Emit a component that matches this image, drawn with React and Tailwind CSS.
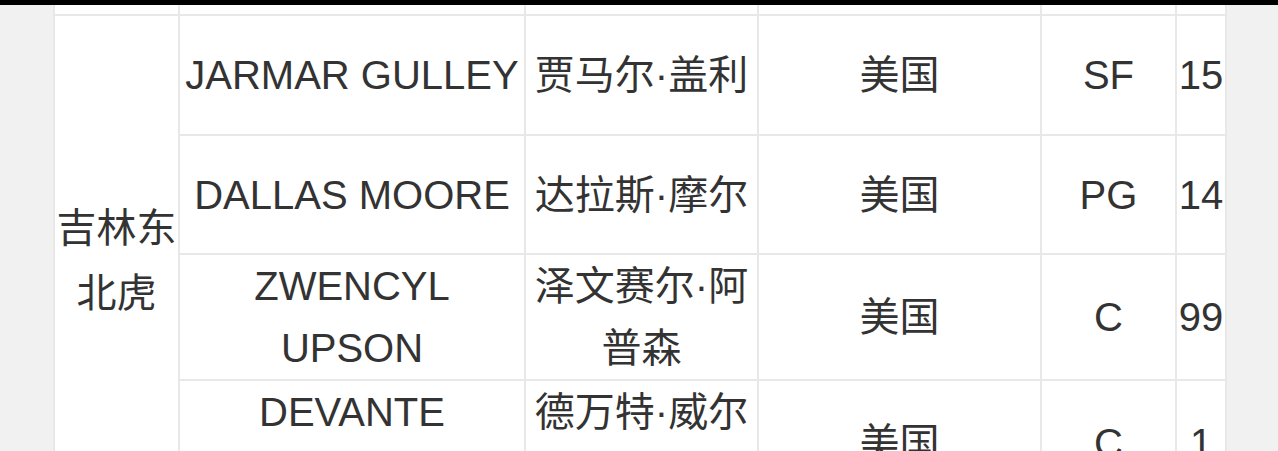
import React from "react";

const rows = [
  { en: "JARMAR GULLEY", cn: "贾马尔·盖利", country: "美国", pos: "SF", num: "15", h: "h-[120px]" },
  { en: "DALLAS MOORE", cn: "达拉斯·摩尔", country: "美国", pos: "PG", num: "14", h: "h-[119px]" },
  { en: "ZWENCYL UPSON", cn: "泽文赛尔·阿普森", country: "美国", pos: "C", num: "99", h: "h-[124px]" },
  { en: "DEVANTE WILSON", cn: "德万特·威尔逊", country: "美国", pos: "C", num: "1", h: "h-[124px]" },
];

const cell = "border-2 border-[#e8e8e8] text-center align-middle p-0";

export default function App() {
  return (
    <div className="h-[451px] w-[1278px] overflow-hidden bg-[#f1f1f1] font-['Liberation_Sans','Noto_Sans_CJK_SC',sans-serif] text-[#333333]">
      <div className="h-[5px] bg-black" />
      <div className="pl-[53px]">
        <table className="w-[1172px] table-fixed border-collapse bg-white text-[40px] leading-[62px]">
          <colgroup>
            <col className="w-[125px]" />
            <col className="w-[346px]" />
            <col className="w-[233px]" />
            <col className="w-[283px]" />
            <col className="w-[135px]" />
            <col className="w-[50px]" />
          </colgroup>
          <tbody>
            <tr className="h-[10px]">
              <td className={cell + " border-t-0"} />
              <td className={cell + " border-t-0"} />
              <td className={cell + " border-t-0"} />
              <td className={cell + " border-t-0"} />
              <td className={cell + " border-t-0"} />
              <td className={cell + " border-t-0"} />
            </tr>
            {rows.map((r, i) => (
              <tr key={i} className={r.h}>
                {i === 0 && (
                  <td rowSpan={4} className={cell + " leading-[65px] whitespace-nowrap"}>
                    吉林东
                    <br />
                    北虎
                  </td>
                )}
                <td className={cell + " px-[2px]"}>{r.en}</td>
                <td className={cell + " px-[4px]"}>{r.cn}</td>
                <td className={cell}>{r.country}</td>
                <td className={cell}>{r.pos}</td>
                <td className={cell + " whitespace-nowrap"}>{r.num}</td>
              </tr>
            ))}
          </tbody>
        </table>
      </div>
    </div>
  );
}
